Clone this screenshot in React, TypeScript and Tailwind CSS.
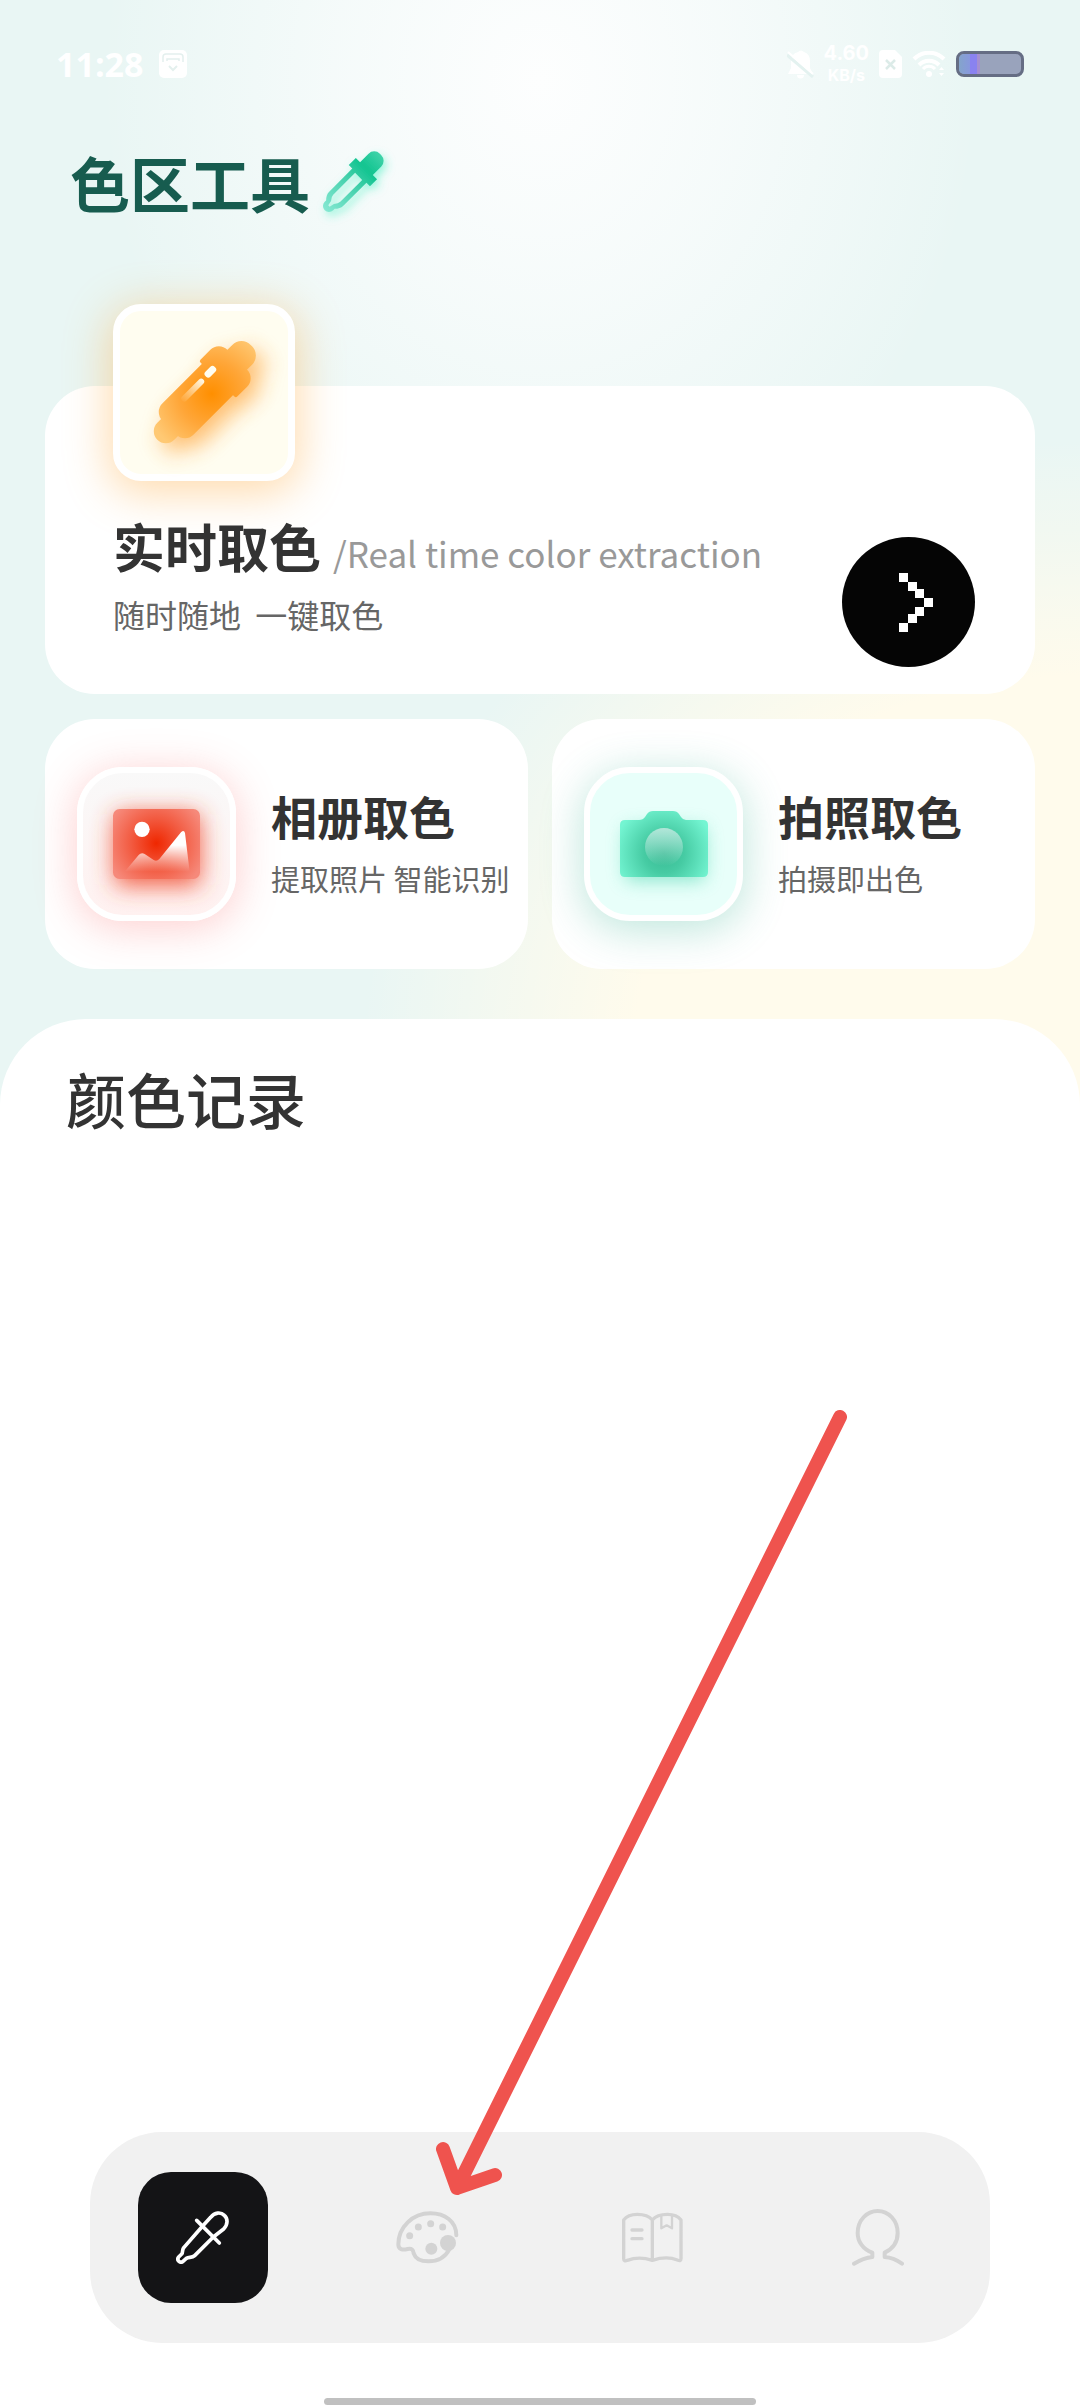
import type { ReactNode } from "react";

const StatusBar = () => {
  return (
    <div className="flex h-32 items-center justify-between px-[56px] text-white">
      <div className="flex items-center gap-4">
        <span className="font-['Open_Sans',sans-serif] text-[34px] font-bold leading-10">
          11:28
        </span>
        <svg className="h-7 w-7" viewBox="0 0 28 28" fill="none">
          <rect width="28" height="28" rx="5" fill="#fff" />
          <path
            d="M4 12V7a3 3 0 0 1 3-3h14a3 3 0 0 1 3 3v5M8 11V9h12v2"
            stroke="#e4f0ee"
            strokeWidth="1.5"
          />
          <path d="m10 16 4 4 4-4" stroke="#e4f0ee" strokeWidth="2" />
        </svg>
      </div>
      <div className="flex items-center gap-[10px]">
        <svg className="h-[29px] w-[27px]" viewBox="0 0 27 29">
          <path
            d="M4 11q0-7 7-9 3-3 6 0 6 2 6 9v7l3 6H1l3-6ZM10 25h7a3.500 3.500 0 0 1-7 0Z"
            fill="#fff"
          />
          <path d="M0 5l26 22" stroke="#e4f2f0" strokeWidth="3" />
          <path d="M1 2l25 22" stroke="#fff" strokeWidth="2" />
        </svg>
        <div className="flex flex-col items-center font-[Inter,sans-serif] font-bold leading-[22px]">
          <span className="text-[20px]">4.60</span>
          <span className="text-[16px]">KB/s</span>
        </div>
        <svg className="h-7 w-[23px]" viewBox="0 0 23 28">
          <path
            d="M4 0h12l7 7v17a4 4 0 0 1-4 4H4a4 4 0 0 1-4-4V4a4 4 0 0 1 4-4Z"
            fill="#fff"
          />
          <path d="m7 10 9 9m0-9-9 9" stroke="#dcebe8" strokeWidth="2.500" />
        </svg>
        <svg className="h-[26px] w-[34px]" viewBox="0 0 34 26" fill="none">
          <path
            d="M2 8a21 21 0 0 1 30 0M7 14a14 14 0 0 1 20 0"
            stroke="#fff"
            strokeWidth="4"
          />
          <path d="M11 18a8 8 0 0 1 12 0" stroke="#fff" strokeWidth="3" />
          <circle cx="17" cy="23" r="3" fill="#fff" />
          <path d="m27 19 2.500-3 2.500 3Zm0 3h5l-2.500 3Z" fill="#fff" />
        </svg>
        <div className="flex h-[26px] w-[68px] overflow-hidden rounded-lg border-[3px] border-[#656d84] bg-[#99a3bc]">
          <span className="w-[11px] bg-linear-to-r from-[#84a4cb] to-[#8898dd]" />
          <span className="w-[7px] bg-[#8a82f0]" />
          <span className="w-[3px] bg-[#a58fd0]" />
        </div>
      </div>
    </div>
  );
};

const TitleDropper = () => {
  return (
    <svg className="h-[60px] w-[60px] overflow-visible" viewBox="0 0 60 60">
      <defs>
        <linearGradient id="dropper" x1="0" y1="0" x2="0" y2="1">
          <stop offset="0" stopColor="#3fd3a9" />
          <stop offset="0.25" stopColor="#12c490" />
          <stop offset="0.5" stopColor="#43d0ab" />
          <stop offset="1" stopColor="#84e8d2" />
        </linearGradient>
        <filter id="dropperGlow" x="-50%" y="-50%" width="200%" height="200%">
          <feDropShadow
            dx="3"
            dy="4"
            stdDeviation="4"
            floodColor="#3df0be"
            floodOpacity="0.5"
          />
        </filter>
      </defs>
      <g filter="url(#dropperGlow)">
        <g transform="translate(30 30) rotate(45)">
          <path
            fill="url(#dropper)"
            fillRule="evenodd"
            d="M-9-31a8 8 0 0 1 8-8h2a8 8 0 0 1 8 8v12h6v10h-5v33q0 4-4 8v2a6 6 0 0 1-12 0v-2q-4-4-4-8v-33h-5v-10h6ZM-5-8v31q0 3 3 6l1 5h2l1-5q3-3 3-6v-31Z"
          />
        </g>
      </g>
    </svg>
  );
};

const MarkerIcon = () => {
  const shape = (
    <>
      <rect x="-14" y="-67" width="28" height="34" rx="13" />
      <path d="M-26-21v-14a12 12 0 0 1 12-12h28a12 12 0 0 1 12 12v14q0 2-2 2h-48q-2 0-2-2Z" />
      <path d="M-22-21h44v58a12 12 0 0 1-12 12h-20a12 12 0 0 1-12-12Z" />
      <rect x="-12" y="36" width="24" height="30" rx="12" />
    </>
  );
  return (
    <svg
      className="h-[102px] w-[102px] overflow-visible"
      viewBox="-51 -51 102 102"
    >
      <defs>
        <radialGradient
          id="marker"
          gradientUnits="userSpaceOnUse"
          cx="6"
          cy="-5"
          r="66"
        >
          <stop offset="0" stopColor="#ff8f00" />
          <stop offset="0.5" stopColor="#ffa638" />
          <stop offset="1" stopColor="#ffc974" />
        </radialGradient>
        <linearGradient
          id="shine"
          gradientUnits="userSpaceOnUse"
          x1="0"
          y1="-10"
          x2="0"
          y2="22"
        >
          <stop offset="0" stopColor="#fffdf0" />
          <stop offset="1" stopColor="#fffdf0" stopOpacity="0" />
        </linearGradient>
        <filter id="markerGlow" x="-50%" y="-50%" width="200%" height="200%">
          <feGaussianBlur stdDeviation="11" />
        </filter>
      </defs>
      <g
        transform="translate(8 9) rotate(45)"
        fill="#ff9d2b"
        opacity="0.65"
        filter="url(#markerGlow)"
      >
        {shape}
      </g>
      <g transform="rotate(45)">
        <g fill="url(#marker)">{shape}</g>
        <rect x="-14" y="-26" width="7" height="13" rx="3" fill="#fffdf0" />
        <rect x="-13" y="-9" width="6" height="30" rx="3" fill="url(#shine)" />
      </g>
    </svg>
  );
};

const PictureIcon = () => {
  return (
    <svg
      className="h-[70px] w-[87px] overflow-visible"
      viewBox="0 0 261 210"
      aria-hidden="true"
    >
      <defs>
        <radialGradient
          id="picture"
          gradientUnits="userSpaceOnUse"
          cx="130"
          cy="103"
          r="150"
        >
          <stop offset="0" stopColor="#ef2700" />
          <stop offset="0.5" stopColor="#f25a40" />
          <stop offset="1" stopColor="#f6897a" />
        </radialGradient>
        <linearGradient id="hill" x1="0" y1="0" x2="0" y2="1">
          <stop offset="0.35" stopColor="#fff" />
          <stop offset="1" stopColor="#fff" stopOpacity="0" />
        </linearGradient>
        <filter id="pictureGlow" x="-60%" y="-70%" width="220%" height="240%">
          <feGaussianBlur stdDeviation="36" />
        </filter>
      </defs>
      <rect
        x="6"
        y="14"
        width="255"
        height="215"
        rx="20"
        fill="#f04a2c"
        opacity="0.9"
        filter="url(#pictureGlow)"
      />
      <rect width="261" height="210" rx="20" fill="url(#picture)" />
      <circle cx="87" cy="61" r="23" fill="#fff" />
      <path
        d="M35 188 77 138q8-9 18-3l27 18q9 6 17-3l65-80q9-9 12 2l14 116Z"
        fill="url(#hill)"
      />
    </svg>
  );
};

const CameraIcon = () => {
  return (
    <svg
      className="h-[66px] w-[88px] overflow-visible"
      viewBox="0 0 88 66"
      aria-hidden="true"
    >
      <defs>
        <radialGradient
          id="camera"
          gradientUnits="userSpaceOnUse"
          cx="44"
          cy="42"
          r="50"
        >
          <stop offset="0" stopColor="#37ba93" />
          <stop offset="0.4" stopColor="#46cba3" />
          <stop offset="1" stopColor="#74f5d2" />
        </radialGradient>
        <linearGradient id="lens" x1="0" y1="0" x2="0" y2="1">
          <stop offset="0" stopColor="#b2e6d9" />
          <stop offset="1" stopColor="#b2e6d9" stopOpacity="0" />
        </linearGradient>
        <filter id="cameraGlow" x="-50%" y="-50%" width="200%" height="220%">
          <feGaussianBlur stdDeviation="9" />
        </filter>
      </defs>
      <rect
        x="5"
        y="16"
        width="80"
        height="54"
        rx="6"
        fill="#3fd3a8"
        opacity="0.55"
        filter="url(#cameraGlow)"
      />
      <path
        d="M5 9h14q4 0 6-3l2-3q2-3 6-3h20q4 0 6 3l2 3q2 3 5 3h17q5 0 5 5v47q0 5-5 5H5q-5 0-5-5V14q0-5 5-5Z"
        fill="url(#camera)"
      />
      <circle cx="44" cy="36" r="19" fill="url(#lens)" />
    </svg>
  );
};

// pixel style chevron, [x, y] of every 9px block
const chevronBlocks = [
  [0, 0],
  [9, 9],
  [16, 16],
  [25, 25],
  [16, 34],
  [9, 41],
  [0, 50],
];

const RealTimeCard = () => {
  return (
    <section className="mt-[174px] flex items-end justify-between rounded-[50px] bg-white pl-[68px] pr-[60px]">
      <div className="pb-16">
        <div className="-mt-[82px] flex h-[177px] w-[182px] items-center justify-center rounded-[28px] border-[7px] border-white bg-[#fffdf0] shadow-[0_8px_44px_4px_rgba(255,170,60,0.42)]">
          <MarkerIcon />
        </div>
        <div className="mt-[39px] flex items-baseline gap-3 whitespace-nowrap">
          <h2 className="text-[52px] font-bold leading-[52px] text-[#333]">
            实时取色
          </h2>
          <span className="text-[35px] leading-[35px] text-[#999]">
            /Real time color extraction
          </span>
        </div>
        <p className="mt-[26px] whitespace-pre text-[32px] leading-8 text-[#666]">
          随时随地{"  "}一键取色
        </p>
      </div>
      <button
        type="button"
        aria-label="实时取色"
        className="mb-[27px] flex h-[130px] w-[133px] shrink-0 items-center justify-center rounded-[50%] bg-[#050505] pl-[14px]"
      >
        <svg className="h-[59px] w-[34px]" viewBox="0 0 34 59" fill="#fff">
          {chevronBlocks.map(([x, y]) => (
            <rect key={`${x}-${y}`} x={x} y={y} width="9" height="9" />
          ))}
        </svg>
      </button>
    </section>
  );
};

const PickCard = ({
  title,
  desc,
  tileClass,
  children,
}: {
  title: string;
  desc: string;
  tileClass: string;
  children: ReactNode;
}) => {
  return (
    <button
      type="button"
      className="flex items-center gap-[35px] rounded-[50px] bg-white py-12 pl-8 text-left"
    >
      <span
        className={`flex h-[154px] w-[159px] shrink-0 items-center justify-center rounded-[46px] border-[6px] border-white ${tileClass}`}
      >
        {children}
      </span>
      <span className="flex flex-col gap-[26px] whitespace-nowrap pb-[3px]">
        <span className="text-[46px] font-bold leading-[46px] text-[#333]">
          {title}
        </span>
        <span className="text-[29px] leading-[29px] text-[#666]">{desc}</span>
      </span>
    </button>
  );
};

const tabs = [
  {
    name: "取色",
    active: true,
    icon: (
      <svg
        className="h-[53px] w-[53px]"
        viewBox="0 0 159 159"
        fill="none"
        stroke="currentColor"
        strokeWidth="11"
        strokeLinecap="round"
        strokeLinejoin="round"
      >
        <path d="m80 45 24-26c12-15 30-17 41-6 11 10 11 28-2 41l-31 24-56 56c-8 8-17 3-25 8l-10 9c-7 7-21-3-13-13l9-9c5-6 0-13 7-20Z" />
        <path d="m62 28 68 68" />
      </svg>
    ),
  },
  {
    name: "色卡",
    active: false,
    icon: (
      <svg
        className="h-[53px] w-[63px]"
        viewBox="0 0 189 159"
        fill="none"
        stroke="currentColor"
        strokeWidth="12"
        strokeLinecap="round"
      >
        <path d="M181 73C181 30 146 7 103 7 50 7 7 48 7 100c0 16 13 18 28 14 12-3 17 3 18 13 5 15 21 24 44 24 28 0 51-13 63-36" />
        <g fill="currentColor" stroke="none">
          <circle cx="41" cy="74" r="10.500" />
          <circle cx="67" cy="48" r="10.500" />
          <circle cx="104" cy="38" r="10.500" />
          <circle cx="140" cy="48" r="10.500" />
          <circle cx="106" cy="113" r="18" />
          <circle cx="156" cy="96" r="24" />
        </g>
      </svg>
    ),
  },
  {
    name: "知识",
    active: false,
    icon: (
      <svg
        className="h-[51px] w-[61px]"
        viewBox="0 0 183 153"
        fill="none"
        stroke="currentColor"
        strokeWidth="10"
        strokeLinecap="round"
        strokeLinejoin="round"
      >
        <path d="M5 24C14 12 28 7 46 7s36 6 45 17c9-11 27-17 45-17s33 6 41 17v116c0 7-4 7-11 4-20-8-47-8-75 1-28-9-53-8-75 0-7 3-11 2-11-5ZM91 24v119M30 54h30M30 80h30" />
        <path d="M118 12v37l16-9 16 9V12" strokeWidth="7" />
      </svg>
    ),
  },
  {
    name: "我的",
    active: false,
    icon: (
      <svg
        className="h-[57px] w-[52px]"
        viewBox="0 0 156 171"
        fill="none"
        stroke="currentColor"
        strokeWidth="12"
        strokeLinecap="round"
        strokeLinejoin="round"
      >
        <path d="M6 164c20-12 36-18 55-20v-13C32 121 17 97 17 72 17 34 44 6 77 6s60 28 60 66c0 25-14 47-39 59v13c18 1 34 7 52 20" />
      </svg>
    ),
  },
];

const TabBar = () => {
  return (
    <nav className="mx-[90px] mt-auto grid grid-cols-4 rounded-[72px] bg-[#f1f1f1] py-10">
      {tabs.map((tab) => (
        <button
          key={tab.name}
          type="button"
          aria-label={tab.name}
          className={`mx-auto flex h-[131px] w-[130px] items-center justify-center rounded-[33px] ${
            tab.active ? "bg-[#141416] text-white" : "text-[#d3d3d3]"
          }`}
        >
          {tab.icon}
        </button>
      ))}
    </nav>
  );
};

const App = () => {
  return (
    <div className="relative flex min-h-screen flex-col overflow-hidden bg-[#e9f6f4] bg-[radial-gradient(720px_620px_at_100%_1060px,#fffbec_62%,transparent_100%),radial-gradient(440px_520px_at_50%_80px,#fdfefe_0%,#fbfdfdb0_45%,transparent_100%)] font-['Noto_Sans_CJK_SC',sans-serif]">
      <StatusBar />
      <header className="flex items-center gap-[13px] pl-[70px] pt-6">
        <h1 className="text-[60px] font-bold leading-[60px] text-[#175c4f]">
          色区工具
        </h1>
        <TitleDropper />
      </header>
      <main className="flex flex-1 flex-col">
        <div className="px-[45px]">
          <RealTimeCard />
          <div className="mt-[25px] grid grid-cols-2 gap-6">
            <PickCard
              title="相册取色"
              desc="提取照片 智能识别"
              tileClass="bg-linear-to-b from-[#f9f9f9] to-[#fff1f0] shadow-[0_6px_40px_2px_rgba(250,90,90,0.28)]"
            >
              <PictureIcon />
            </PickCard>
            <PickCard
              title="拍照取色"
              desc="拍摄即出色"
              tileClass="bg-[#e8fffa] shadow-[0_8px_42px_2px_rgba(60,180,150,0.32)]"
            >
              <CameraIcon />
            </PickCard>
          </div>
        </div>
        <section className="mt-[50px] flex flex-1 flex-col rounded-t-[86px] bg-white pt-[49px]">
          <h2 className="pl-[66px] text-[60px] font-medium leading-[60px] text-[#333]">
            颜色记录
          </h2>
          <TabBar />
          <div className="mx-auto mb-[3px] mt-[55px] h-[7px] w-2/5 rounded-full bg-[#c0c0c0]" />
        </section>
      </main>
      <svg
        className="pointer-events-none absolute bottom-[212px] left-[436px] h-[786px] w-[411px]"
        viewBox="0 0 411 786"
        fill="none"
        stroke="#ef534e"
        strokeWidth="14"
        strokeLinecap="round"
        strokeLinejoin="round"
        aria-hidden="true"
      >
        <path d="M404 7 21 778M7 739l14 39 38-13" />
      </svg>
    </div>
  );
};

export default App;
